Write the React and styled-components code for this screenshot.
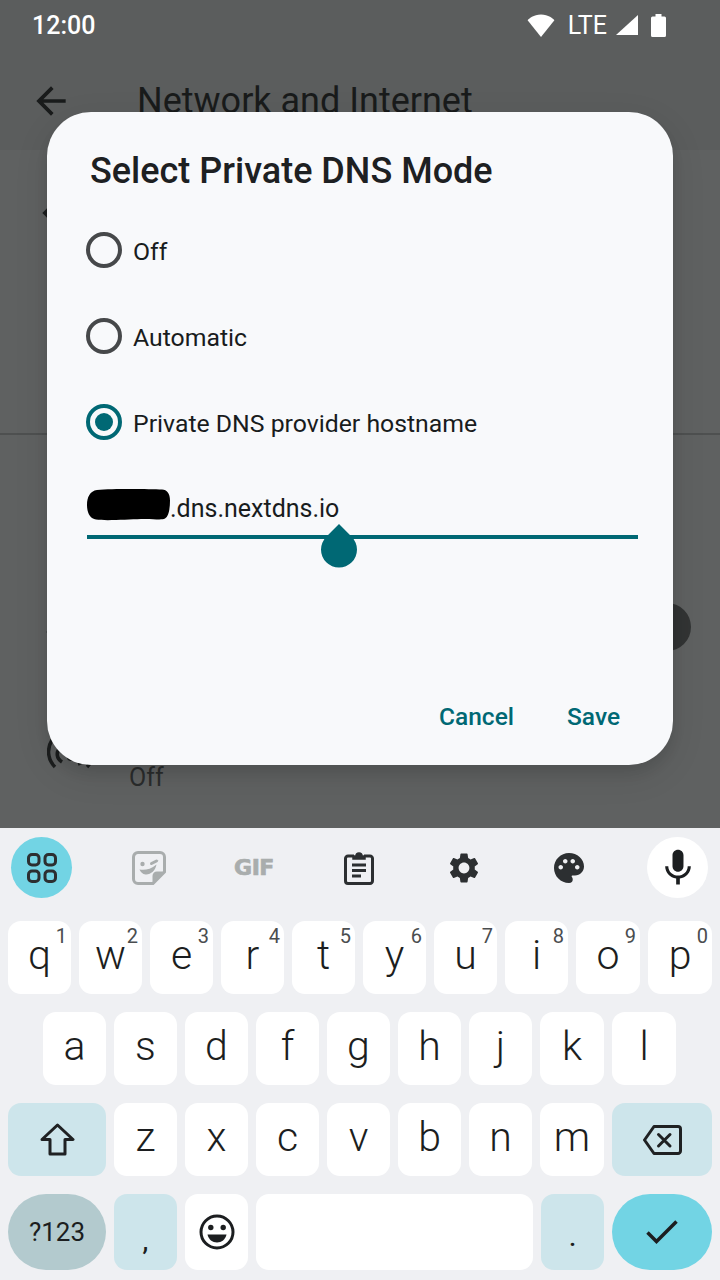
import React from "react";
import styled, { createGlobalStyle } from "styled-components";
import { MdArrowBack, MdMic, MdPalette, MdSettings } from "react-icons/md";

const GlobalStyle = createGlobalStyle`
  html, body {
    margin: 0;
    padding: 0;
    background: #eff0f3;
  }
  * {
    box-sizing: border-box;
  }
`;

const Screen = styled.div`
  position: relative;
  width: 720px;
  height: 1280px;
  overflow: hidden;
  display: flex;
  flex-direction: column;
  font-family: Roboto, "Noto Sans", sans-serif;
`;

/* dimmed settings page behind the dialog */
const Backdrop = styled.div`
  height: 828px;
  flex-shrink: 0;
  background: #5f6161;
  display: flex;
  flex-direction: column;
`;

const TopArea = styled.div`
  height: 150px;
  background: #5b5d5d;
  display: flex;
  flex-direction: column;
`;

const StatusBar = styled.div`
  height: 52px;
  padding: 0 54px 2px 32px;
  display: flex;
  align-items: center;
  justify-content: space-between;
  color: #fff;
`;

const Time = styled.span`
  font-size: 25px;
  font-weight: 500;
`;

const StatusIcons = styled.div`
  display: flex;
  align-items: center;
`;

const Lte = styled.span`
  font-size: 25px;
  margin: 0 9px 0 13px;
`;

const AppBar = styled.div`
  flex: 1;
  padding: 0 0 0 29px;
  display: flex;
  align-items: center;
  gap: 64px;
  color: #191b1b;
  font-size: 36px;
`;

const ListSection = styled.div`
  height: ${(p) => p.$height}px;
  padding: ${(p) => p.$top}px 29px 0 ${(p) => p.$left}px;
  border-bottom: ${(p) => (p.$divider ? "2px solid #4e5050" : "none")};
  display: flex;
  align-items: flex-start;
  justify-content: space-between;
`;

const SmallMark = styled.span`
  width: 8px;
  height: 8px;
  margin-top: ${(p) => p.$offset}px;
  background: #1c1e1e;
  transform: rotate(45deg);
`;

const ToggleThumb = styled.span`
  width: 48px;
  height: 48px;
  border-radius: 50%;
  background: #323434;
`;

const HotspotRow = styled.div`
  display: flex;
  align-items: flex-start;
  gap: 34px;
`;

const OffLabel = styled.span`
  margin-top: 32px;
  color: #2a2c2c;
  font-size: 25px;
  line-height: 30px;
`;

const Dialog = styled.div`
  position: absolute;
  left: 47px;
  top: 112px;
  width: 626px;
  height: 653px;
  padding: 0 35px 0 39px;
  border-radius: 44px;
  background: #f8f9fb;
  box-shadow: 0 8px 12px rgba(0, 0, 0, 0.08), 0 10px 34px rgba(0, 0, 0, 0.1);
  display: flex;
  flex-direction: column;
  color: #191c1d;
`;

const DialogTitle = styled.h2`
  margin: 0;
  height: 120px;
  padding: 0 0 2px 4px;
  display: flex;
  align-items: center;
  font-size: 36px;
  font-weight: 500;
  color: #1d2022;
`;

const RadioList = styled.div`
  display: flex;
  flex-direction: column;
  gap: 50px;
`;

const RadioRow = styled.div`
  height: 36px;
  display: flex;
  align-items: center;
  gap: 11px;
  font-size: 24.8px;
`;

const RadioLabel = styled.span`
  padding-top: 2px;
`;

const RadioRing = styled.span`
  width: 36px;
  height: 36px;
  border-radius: 50%;
  border: 4px solid ${(p) => (p.$checked ? "#006874" : "#46484a")};
  display: flex;
  align-items: center;
  justify-content: center;
`;

const RadioDot = styled.span`
  width: 18px;
  height: 18px;
  border-radius: 50%;
  background: #006874;
`;

const Field = styled.div`
  position: relative;
  height: 55px;
  margin: 44px 0 0 1px;
  border-bottom: 4px solid #006874;
  display: flex;
  align-items: flex-start;
  padding-top: 5px;
  font-size: 25px;
`;

const Hostname = styled.span`
  line-height: 31px;
  margin-top: 4px;
`;

const Handle = styled.svg`
  position: absolute;
  left: 234px;
  top: 40px;
`;

const DialogActions = styled.div`
  margin-top: auto;
  height: 63px;
  padding: 0 18px 0 0;
  display: flex;
  justify-content: flex-end;
  gap: 53px;
  font-size: 24.5px;
  font-weight: 500;
  color: #006874;
`;

const Keyboard = styled.div`
  flex: 1;
  background: #eff0f3;
  display: flex;
  flex-direction: column;
`;

const Toolbar = styled.div`
  height: 93px;
  padding: 9px 12px 0 11px;
  display: grid;
  grid-template-columns: 85.5px repeat(5, 105px) 86.5px;
  align-items: start;
`;

const ToolSlot = styled.div`
  width: 61px;
  height: 61px;
  border-radius: 50%;
  justify-self: ${(p) => p.$align || "center"};
  background: ${(p) => p.$bg || "transparent"};
  display: flex;
  align-items: center;
  justify-content: center;
  color: #2c2f31;
`;

const GifLabel = styled.span`
  font-family: "DejaVu Sans", sans-serif;
  font-size: 22px;
  font-weight: 700;
  letter-spacing: -0.5px;
  color: #a9adad;
  -webkit-text-stroke: 0.7px #a9adad;
`;

const KeyRows = styled.div`
  display: flex;
  flex-direction: column;
  gap: 18px;
`;

const KeyRow = styled.div`
  display: flex;
  gap: 8px;
  padding-left: ${(p) => p.$indent || 8}px;
  height: ${(p) => p.$height || 73}px;
`;

const KeyCap = styled.div`
  position: relative;
  width: ${(p) => p.$width || 63}px;
  height: 100%;
  flex-shrink: 0;
  border-radius: ${(p) => p.$radius || 13}px;
  background: ${(p) => p.$bg || "#fff"};
  display: flex;
  align-items: center;
  justify-content: center;
  padding-top: ${(p) => p.$drop || 0}px;
  padding-bottom: ${(p) => p.$lift || 0}px;
  color: #1c1e20;
  font-family: Roboto, sans-serif;
  font-size: ${(p) => p.$size || 41}px;
  font-weight: ${(p) => p.$weight || 350};
`;

const KeyHint = styled.span`
  position: absolute;
  top: 3px;
  right: 4px;
  font-size: 20px;
  font-weight: 400;
  line-height: 24px;
  color: #4a4d4f;
`;

const FUNCTION_KEY = "#cde5eb";
const ACCENT_KEY = "#72d4e4";

const topRow = [
  ["q", "1"], ["w", "2"], ["e", "3"], ["r", "4"], ["t", "5"],
  ["y", "6"], ["u", "7"], ["i", "8"], ["o", "9", 64], ["p", "0", 64],
];
const middleRow = [
  ["a"], ["s"], ["d"], ["f"], ["g"], ["h"], ["j"], ["k", null, 64], ["l", null, 64],
];
const lowerRow = [["z"], ["x"], ["c"], ["v"], ["b"], ["n"], ["m", null, 64]];

const LetterKeys = ({ keys }) =>
  keys.map(([letter, hint, width]) => (
    <KeyCap key={letter} $width={width} $lift={5}>
      {letter}
      {hint && <KeyHint>{hint}</KeyHint>}
    </KeyCap>
  ));

const WifiIcon = () => (
  <svg width="28" height="23" viewBox="0 0 28 23">
    <path d="M14 23 0.6 6.2C1.8 4.6 6.6 0.4 14 0.4s12.2 4.2 13.4 5.8z" fill="#fff" />
  </svg>
);

const SignalIcon = () => (
  <svg width="22" height="20" viewBox="0 0 22 20">
    <path d="M22 0V20H0z" fill="#fff" />
  </svg>
);

const BatteryIcon = () => (
  <svg width="15" height="23" viewBox="0 0 15 23" style={{ marginLeft: 13 }}>
    <path d="M4.5 0h6v2.5h3a1.5 1.5 0 0 1 1.5 1.5v17.5a1.5 1.5 0 0 1-1.5 1.5h-12A1.5 1.5 0 0 1 0 21.5V4a1.5 1.5 0 0 1 1.5-1.5h3z" fill="#fff" />
  </svg>
);

const HotspotIcon = () => (
  <svg width="48" height="44" viewBox="0 0 48 44" fill="none" stroke="#1c1e1e" strokeWidth="3.5">
    <path d="M8 36C0 28 0 17 5 9" />
    <path d="M15 31C9 27 9 21 13 17" />
    <path d="M40 36C48 28 48 17 43 9" />
    <path d="M31 33C37 31 39 27 38 22" />
    <circle cx="24" cy="26" r="4" fill="#1c1e1e" stroke="none" />
  </svg>
);

const RedactionBlob = () => (
  <svg width="83" height="32" viewBox="0 0 83 32">
    <path d="M10 1C26-0.5 62 0 75 0.5c5 0 8 4 8 11 0 7-1 16-5 18-4 2-12 0-24 0.5-14 0.5-36 2-45 0.5C3 29.500 0 24 0 16 0 8 3 2 10 1z" fill="#000" />
  </svg>
);

const AppsIcon = () => (
  <svg width="30" height="30" viewBox="0 0 30 30" fill="none" stroke="#2c2f31" strokeWidth="3">
    <rect x="1.500" y="1.500" width="10.500" height="10.500" rx="3.500" />
    <rect x="18" y="1.500" width="10.500" height="10.500" rx="3.500" />
    <rect x="1.500" y="18" width="10.500" height="10.500" rx="3.500" />
    <rect x="18" y="18" width="10.500" height="10.500" rx="3.500" />
  </svg>
);

const StickerIcon = () => (
  <svg width="34" height="34" viewBox="0 0 34 34" fill="none">
    <path d="M6 1.500H28a4.500 4.500 0 0 1 4.500 4.500V21L21 32.500H6A4.500 4.500 0 0 1 1.500 28V6A4.500 4.500 0 0 1 6 1.500z" stroke="#a9adad" strokeWidth="3" />
    <path d="M32 20.500H25a4.500 4.500 0 0 0-4.500 4.500V32z" fill="#a9adad" />
    <circle cx="10.500" cy="13" r="2.200" fill="#a9adad" />
    <path d="M19.500 12.500l5-2.500" stroke="#a9adad" strokeWidth="3" strokeLinecap="round" />
    <path d="M7.500 18.500c5 1 11 0 17-5-1 6-6 10.500-11 10-3-0.300-5-2.500-6-5z" fill="#a9adad" />
  </svg>
);

const ClipboardIcon = () => (
  <svg width="30" height="34" viewBox="0 0 30 34" fill="none" stroke="#2c2f31" strokeWidth="3">
    <path d="M10 5H4a2.500 2.500 0 0 0-2.500 2.500V30A2.500 2.500 0 0 0 4 32.500H26a2.500 2.500 0 0 0 2.500-2.500V7.500A2.500 2.500 0 0 0 26 5H20" strokeLinejoin="round" />
    <path d="M9 5h3a3 3 0 0 1 6 0h3v3H9z" fill="#2c2f31" strokeWidth="1.500" />
    <path d="M8 14H22M8 19.500H22M8 25H17" />
  </svg>
);

const ShiftIcon = () => (
  <svg width="35" height="33" viewBox="0 0 35 33" fill="none" stroke="#1f2123" strokeWidth="3" strokeLinejoin="round">
    <path d="M17.500 2 33 16.500H25V31H10V16.500H2z" />
  </svg>
);

const BackspaceIcon = () => (
  <svg width="39" height="30" viewBox="0 0 39 30" fill="none" stroke="#1f2123" strokeWidth="3" strokeLinejoin="round">
    <path d="M11 1.500H35a2.500 2.500 0 0 1 2.500 2.500V26a2.500 2.500 0 0 1-2.500 2.500H11L1.500 15z" />
    <path d="M15.500 9.500 27 21M27 9.500 15.500 21" strokeLinecap="round" />
  </svg>
);

const SmileIcon = () => (
  <svg width="36" height="36" viewBox="0 0 36 36">
    <circle cx="18" cy="18" r="16" fill="none" stroke="#1c1e20" strokeWidth="3" />
    <circle cx="11.800" cy="13.500" r="2.700" fill="#1c1e20" />
    <circle cx="24.200" cy="13.500" r="2.700" fill="#1c1e20" />
    <path d="M8.500 20.500h19c-1 5-5 8-9.500 8s-8.500-3-9.500-8z" fill="#1c1e20" />
  </svg>
);

const CheckIcon = () => (
  <svg width="32" height="24" viewBox="0 0 32 24" fill="none" stroke="#1c1e20" strokeWidth="3.500">
    <path d="M1.500 12.500 10.500 21.500 30.500 1.500" />
  </svg>
);

const App = () => (
  <Screen>
    <GlobalStyle />
    <Backdrop>
      <TopArea>
        <StatusBar>
          <Time>12:00</Time>
          <StatusIcons>
            <WifiIcon />
            <Lte>LTE</Lte>
            <SignalIcon />
            <BatteryIcon />
          </StatusIcons>
        </StatusBar>
        <AppBar>
          <MdArrowBack size={44} />
          <span>Network and Internet</span>
        </AppBar>
      </TopArea>
      <ListSection $height={285} $top={51} $left={44} $divider>
        <SmallMark $offset={8} />
      </ListSection>
      <ListSection $height={168} $top={0} $left={40} />
      <ListSection $height={60} $top={0} $left={48}>
        <SmallMark $offset={25} />
        <ToggleThumb />
      </ListSection>
      <ListSection $height={165} $top={68} $left={47}>
        <HotspotRow>
          <HotspotIcon />
          <OffLabel>Off</OffLabel>
        </HotspotRow>
      </ListSection>
    </Backdrop>

    <Dialog>
      <DialogTitle>Select Private DNS Mode</DialogTitle>
      <RadioList>
        <RadioRow>
          <RadioRing />
          <RadioLabel>Off</RadioLabel>
        </RadioRow>
        <RadioRow>
          <RadioRing />
          <RadioLabel>Automatic</RadioLabel>
        </RadioRow>
        <RadioRow>
          <RadioRing $checked>
            <RadioDot />
          </RadioRing>
          <RadioLabel>Private DNS provider hostname</RadioLabel>
        </RadioRow>
      </RadioList>
      <Field>
        <RedactionBlob />
        <Hostname>.dns.nextdns.io</Hostname>
        <Handle width="36" height="44" viewBox="0 0 36 44">
          <path d="M18 0 30.700 12.800A18 18 0 1 1 5.300 12.800z" fill="#006874" />
        </Handle>
      </Field>
      <DialogActions>
        <span>Cancel</span>
        <span>Save</span>
      </DialogActions>
    </Dialog>

    <Keyboard>
      <Toolbar>
        <ToolSlot $bg={ACCENT_KEY} $align="start">
          <AppsIcon />
        </ToolSlot>
        <ToolSlot>
          <StickerIcon />
        </ToolSlot>
        <ToolSlot>
          <GifLabel>GIF</GifLabel>
        </ToolSlot>
        <ToolSlot>
          <ClipboardIcon />
        </ToolSlot>
        <ToolSlot>
          <MdSettings size={36} />
        </ToolSlot>
        <ToolSlot>
          <MdPalette size={36} />
        </ToolSlot>
        <ToolSlot $bg="#fff" $align="end">
          <MdMic size={44} color="#1c1e20" />
        </ToolSlot>
      </Toolbar>
      <KeyRows>
        <KeyRow>
          <LetterKeys keys={topRow} />
        </KeyRow>
        <KeyRow $indent={43}>
          <LetterKeys keys={middleRow} />
        </KeyRow>
        <KeyRow>
          <KeyCap $width={98} $bg={FUNCTION_KEY} $lift={1}>
            <ShiftIcon />
          </KeyCap>
          <LetterKeys keys={lowerRow} />
          <KeyCap $width={100} $bg={FUNCTION_KEY}>
            <BackspaceIcon />
          </KeyCap>
        </KeyRow>
        <KeyRow $height={76}>
          <KeyCap $width={98} $bg="#b3cace" $radius={38} $size={26} $weight={400}>
            ?123
          </KeyCap>
          <KeyCap $bg={FUNCTION_KEY} $size={26} $drop={18} $weight={500}>
            ,
          </KeyCap>
          <KeyCap>
            <SmileIcon />
          </KeyCap>
          <KeyCap $width={277} />
          <KeyCap $bg={FUNCTION_KEY} $size={26} $drop={10} $weight={500}>
            .
          </KeyCap>
          <KeyCap $width={100} $bg={ACCENT_KEY} $radius={38}>
            <CheckIcon />
          </KeyCap>
        </KeyRow>
      </KeyRows>
    </Keyboard>
  </Screen>
);

export default App;
